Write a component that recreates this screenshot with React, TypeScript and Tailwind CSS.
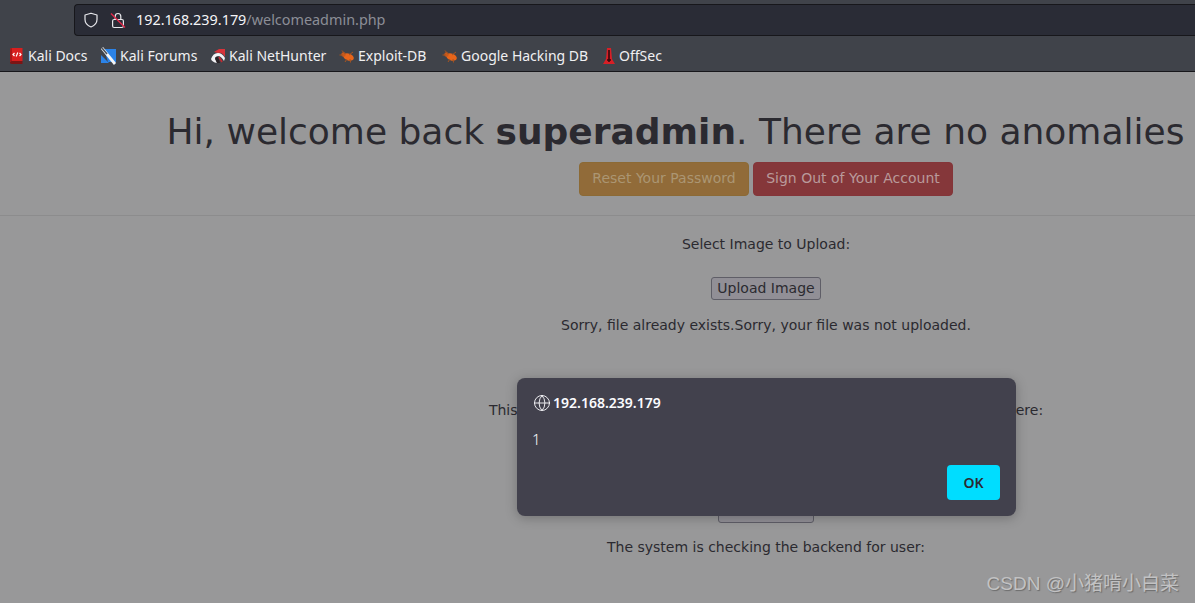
import { Globe } from 'lucide-react';

function KaliDocsIcon() {
  return (
    <svg width="16" height="18" viewBox="0 0 16 18" className="shrink-0">
      <path d="M1 3 Q1 1 3 1 H13.5 V14 H3 Q1 14 1 15.5 Z" fill="#d81f1f" />
      <path d="M1 15.5 Q1 14 3 14 H13.5 V17 H3 Q1 17 1 15.5 Z" fill="#7c1414" />
      <path d="M1 3 Q1 1 3 1 V14 Q1 14 1 15.5 Z" fill="#a81818" />
      <path d="M5.5 6 L4 7.5 L5.5 9 M10.5 6 L12 7.5 L10.5 9 M8.8 5.5 L7.2 9.5" stroke="#fff" strokeWidth="1.2" fill="none" />
    </svg>
  );
}

function KaliForumsIcon() {
  return (
    <svg width="17" height="18" viewBox="0 0 17 18" className="shrink-0">
      <path d="M4 2 H16 V15 H8 Z" fill="#2b83e8" />
      <path d="M1 8 L9 16 H1 Z" fill="#2b83e8" />
      <path d="M2 1 L15 17" stroke="#f2f5f8" strokeWidth="2.8" />
      <path d="M2 1 L7 7" stroke="#4d525a" strokeWidth="1.6" />
    </svg>
  );
}

function NetHunterIcon() {
  return (
    <svg width="16" height="16" viewBox="0 0 16 16" className="shrink-0">
      <path d="M4 4 L9 1 L15 1 V9 Q12 4 8 5 Z" fill="#d8333a" />
      <path d="M1 11 Q3 5 8 5 Q12 5 15 10 L14 13 Q11 8 8 8 Q6 8 5 11 L7 15 Q2 14 1 11 Z" fill="#f2f2f4" />
      <path d="M5 10 Q6 8 8 9 L10 15 L7 15 Z" fill="#2a2326" />
      <path d="M9 9 L12 14" stroke="#c22a30" strokeWidth="1.6" />
    </svg>
  );
}

function ExploitIcon() {
  return (
    <svg width="16" height="14" viewBox="0 0 16 14" className="shrink-0">
      <ellipse cx="9.5" cy="8" rx="5.5" ry="3.4" fill="#e8651a" transform="rotate(20 9.5 8)" />
      <circle cx="4.5" cy="5.5" r="2.2" fill="#c9591b" />
      <path d="M3 1.5 L6 5 M0.5 6 L4 6 M6 13 L8 10 M11.5 13.5 L11 10 M14 3 L10 6" stroke="#a9541f" strokeWidth="1" />
    </svg>
  );
}

function OffSecIcon() {
  return (
    <svg width="14" height="18" viewBox="0 0 14 18" className="shrink-0">
      <path d="M5 1 H9 L10 12 L13 17 H1 L4 12 Z" fill="#d81f26" />
      <path d="M7 3 V15 M5 13 H9" stroke="#36090c" strokeWidth="1.6" />
    </svg>
  );
}

function Bookmark({ icon, label, className }: { icon: React.ReactNode; label: string; className: string }) {
  return (
    <div className={`flex items-center gap-[3px] ${className}`}>
      {icon}
      <span className="whitespace-nowrap">{label}</span>
    </div>
  );
}

export default function App() {
  return (
    <div className="relative h-[603px] w-[1195px] overflow-hidden bg-[#989899] font-['DejaVu_Sans',sans-serif] text-[#2b2a30]">
      {/* Browser toolbar */}
      <div className="h-[72px] border-b border-[#17171b] bg-[#40434a] font-['Noto_Sans',sans-serif]">
        <div className="flex h-[36px] pl-[74px] pt-[4px]">
          <div className="flex h-[32px] flex-1 items-center rounded-l-[4px] border border-[#17171b] border-r-0 bg-[#2a2c36] pl-[8px]">
            <svg width="16" height="16" viewBox="0 0 16 16" fill="none" className="shrink-0">
              <path d="M8 1.2 L14 3 V7.5 Q14 12.5 8 15 Q2 12.5 2 7.5 V3 Z" stroke="#e8e8ec" strokeWidth="1.2" strokeLinejoin="round" />
            </svg>
            <svg width="16" height="17" viewBox="0 0 16 17" fill="none" className="ml-[11px] shrink-0">
              <path d="M5.2 7.5 V4.5 Q5.2 1.5 8 1.5 Q10.8 1.5 10.8 4.5 V7.5" stroke="#e8e8ec" strokeWidth="1.2" />
              <rect x="2.6" y="7.5" width="10.8" height="8" rx="1.5" stroke="#e8e8ec" strokeWidth="1.2" />
              <path d="M1 1.5 L15 15.5" stroke="#e2284a" strokeWidth="1.4" />
            </svg>
            <span className="ml-[10px] text-[14.4px] leading-none text-[#f4f4f6]">
              192.168.239.179<span className="text-[#8c8e96]">/welcomeadmin.php</span>
            </span>
          </div>
        </div>
        <div className="flex h-[36px] items-center pl-[9px] pt-[3px] text-[14px] text-[#f0f0f2]">
          <Bookmark className="w-[91px]" icon={<KaliDocsIcon />} label="Kali Docs" />
          <Bookmark className="w-[110px]" icon={<KaliForumsIcon />} label="Kali Forums" />
          <Bookmark className="w-[129px]" icon={<NetHunterIcon />} label="Kali NetHunter" />
          <Bookmark className="w-[103px]" icon={<ExploitIcon />} label="Exploit-DB" />
          <Bookmark className="w-[160px]" icon={<ExploitIcon />} label="Google Hacking DB" />
          <Bookmark className="" icon={<OffSecIcon />} label="OffSec" />
        </div>
      </div>

      {/* Page, wider than the window */}
      <div className="w-[1532px] text-center">
        <h1 className="pt-[36px] text-[36px] leading-[47px] whitespace-nowrap">
          Hi, welcome back <b>superadmin</b>. There are no anomalies in the log
        </h1>
        <div className="mt-[7px] flex justify-center gap-[4px] text-[14px]">
          <div className="flex h-[34px] w-[170px] items-center justify-center rounded-[4px] border border-[#8c6a35] bg-[#916b39] pb-[2px] text-[#ab9673]">
            Reset Your Password
          </div>
          <div className="flex h-[34px] w-[200px] items-center justify-center rounded-[4px] border border-[#843539] bg-[#85373a] pb-[2px] text-[#b99a9b]">
            Sign Out of Your Account
          </div>
        </div>
        <div className="mt-[19px] h-px bg-[#8c8c8d]" />
        <p className="mt-[20px] text-[14px] leading-[17px]">Select Image to Upload:</p>
        <div className="mt-[24px] flex justify-center">
          <div className="flex h-[23px] w-[110px] items-center justify-center rounded-[3px] border border-[#5f5e67] bg-[#918f96] text-[14px]">
            Upload Image
          </div>
        </div>
        <p className="mt-[17px] text-[14px] leading-[17px]">Sorry, file already exists.Sorry, your file was not uploaded.</p>
        <p className="mt-[68px] text-[14px] leading-[17px]">
          This system is checking the backend for anomalies, you can review them here:
        </p>
        <div className="mt-[92px] flex justify-center">
          <div className="h-[12px] w-[96px] rounded-b-[3px] border border-[#5f5e67] bg-[#918f96]" />
        </div>
        <p className="mt-[16px] text-[14px] leading-[17px]">The system is checking the backend for user:</p>
      </div>

      {/* Alert dialog */}
      <div className="absolute top-[378px] left-[517px] h-[138px] w-[499px] rounded-[8px] bg-[#42414d] font-['Noto_Sans',sans-serif] text-[#fbfbfe] shadow-[0_2px_12px_rgba(0,0,0,0.25)]">
        <div className="flex items-center gap-[2px] pt-[15px] pl-[16px] text-[14px] leading-[20px] font-semibold">
          <Globe size={18} strokeWidth={1.2} />
          192.168.239.179
        </div>
        <p className="mt-[16px] pl-[15px] text-[15px] leading-[20px] font-light">1</p>
        <div className="absolute right-[16px] bottom-[16px] flex h-[35px] w-[53px] items-center justify-center rounded-[4px] bg-[#00ddff] text-[14px] font-semibold text-[#2b2a33]">
          OK
        </div>
      </div>

      {/* Watermark */}
      <div className="absolute right-[16px] bottom-[7px] font-['Liberation_Sans','Noto_Sans_CJK_SC',sans-serif] text-[19px] leading-[24px] text-[#c2c2c3] [text-shadow:1px_1px_1px_#6c6c6c]">
        CSDN @小猪啃小白菜
      </div>
    </div>
  );
}
